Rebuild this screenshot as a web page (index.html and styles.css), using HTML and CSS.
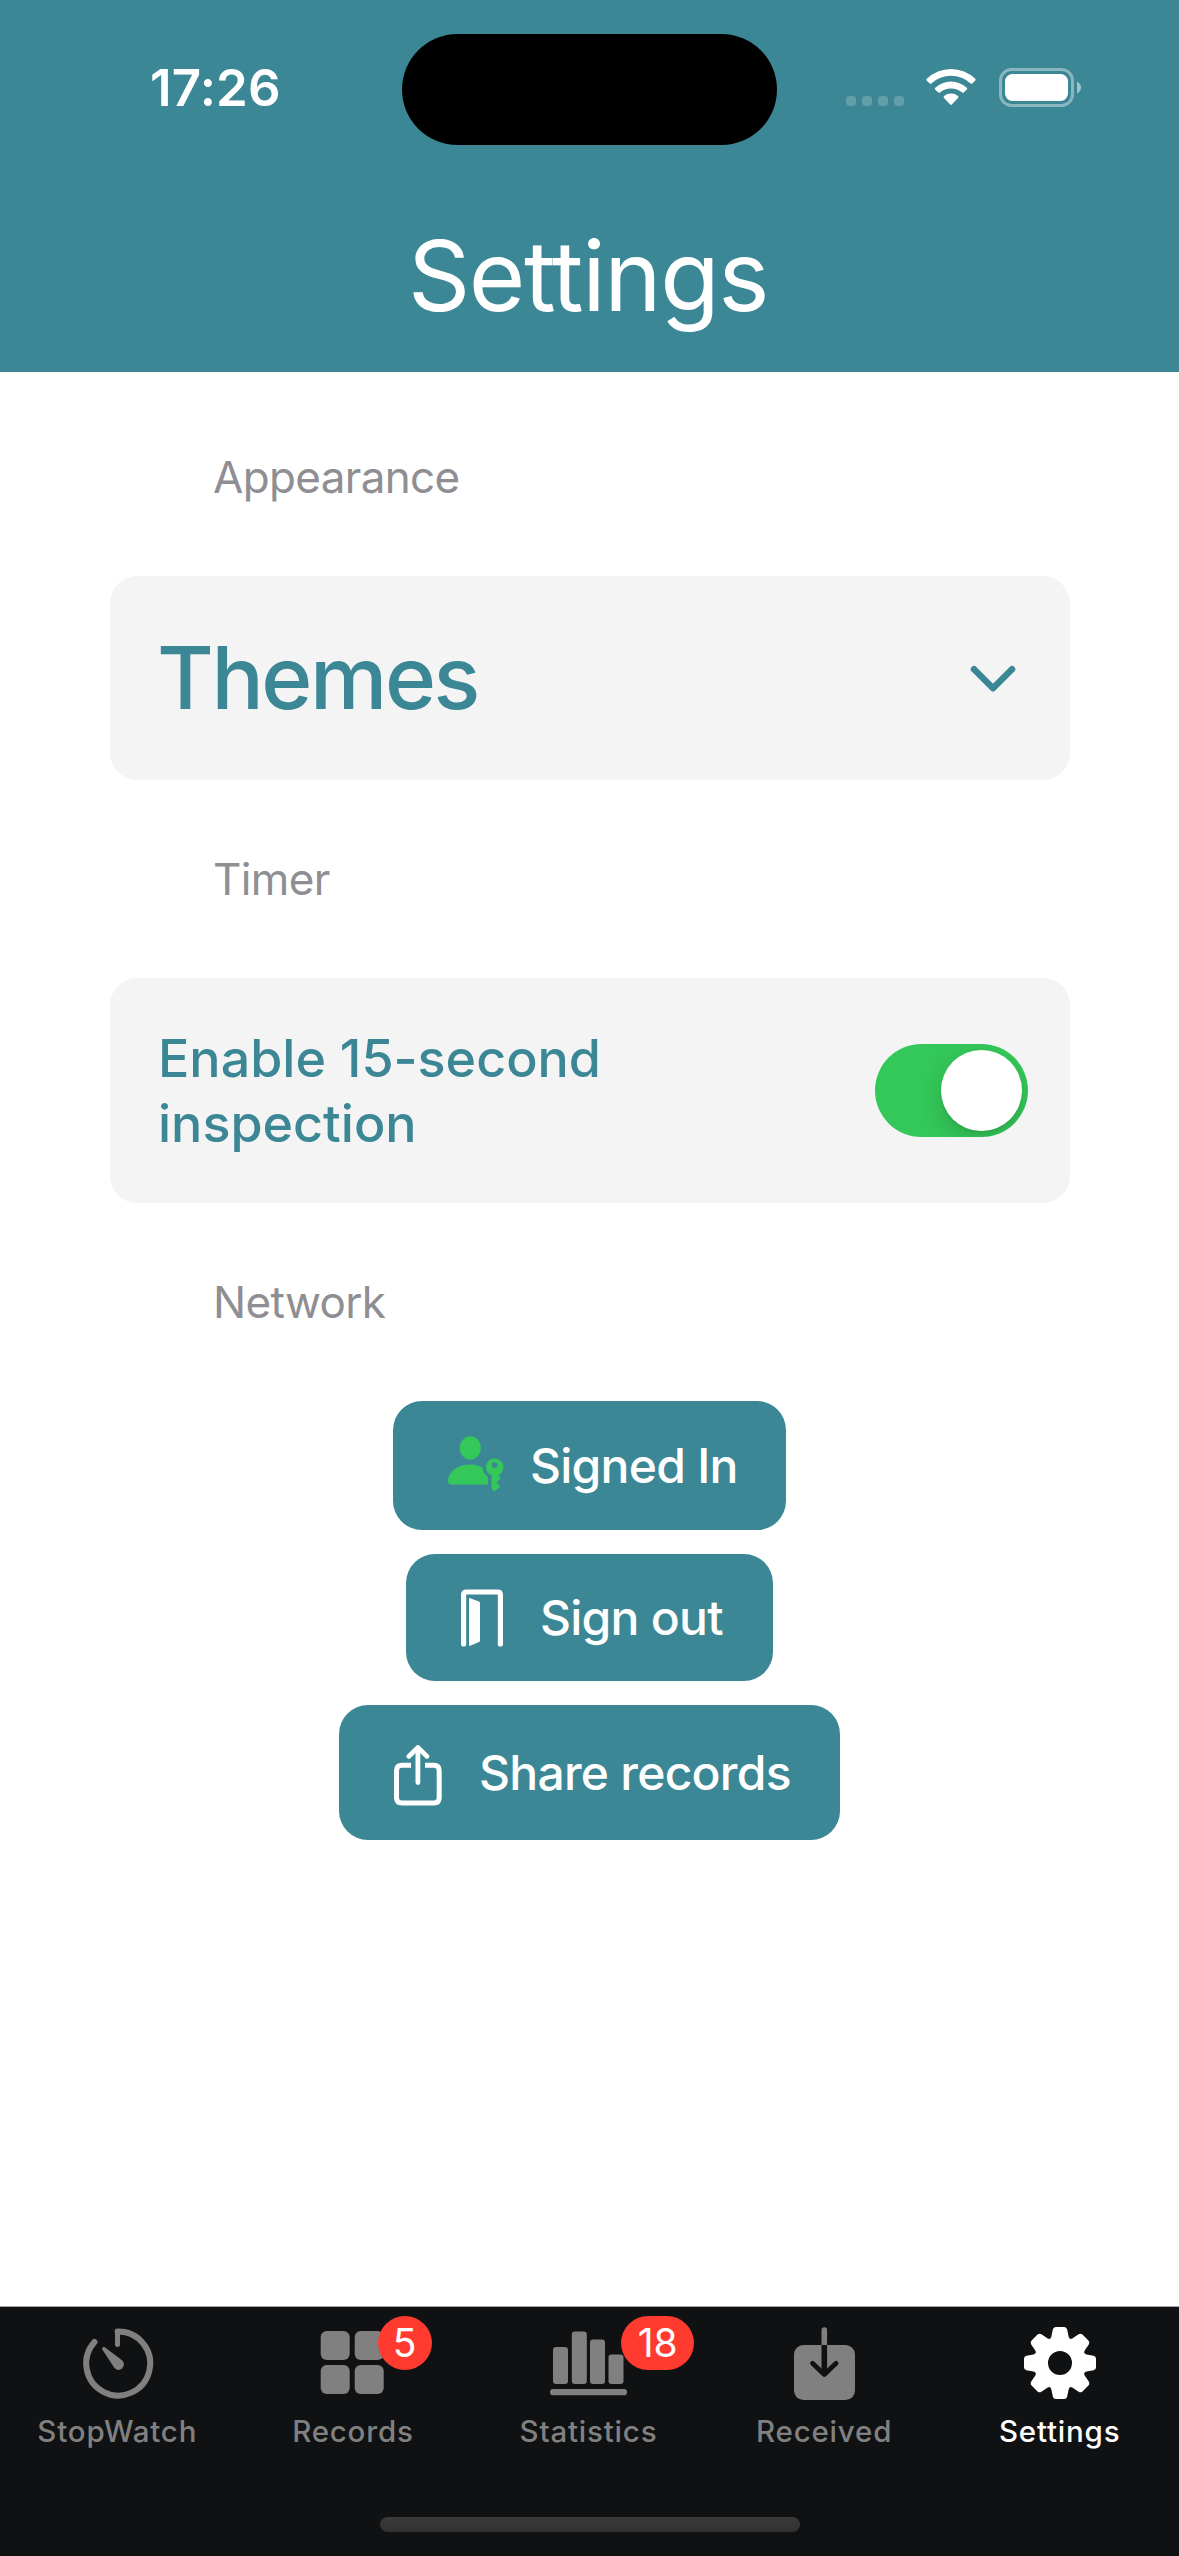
FILE: index.html
```html
<!DOCTYPE html>
<html lang="en">
<head>
<meta charset="utf-8">
<title>Settings</title>
<link rel="stylesheet" href="styles.css">
</head>
<body>
<header class="header">
  <div class="status">
    <div class="time">17:26</div>
    <div class="island"></div>
    <div class="indicators">
      <div class="signal"><i></i><i></i><i></i><i></i></div>
      <svg class="wifi" width="50" height="38" viewBox="0 0 50 38" fill="#fff">
        <path d="M.8 12.8A34.500 34.500 0 0 1 49.200 12.800Q50.200 13.600 49.300 14.500L46.300 17.500Q45.500 18.200 44.700 17.500A29 29 0 0 0 5.300 17.500Q4.500 18.200 3.700 17.500L.7 14.500Q-.2 13.600.8 12.800Z" transform="translate(0 -2)"/>
        <path d="M9.200 19.800A23 23 0 0 1 40.800 19.800Q41.700 20.600 40.900 21.400L37.700 24.600Q36.900 25.300 36.100 24.600A17 17 0 0 0 13.900 24.600Q13.100 25.300 12.300 24.600L9.100 21.400Q8.300 20.600 9.200 19.800Z"/>
        <path d="M18 28A11.500 11.500 0 0 1 32 28Q32.900 29 32 29.900L25.800 36.600Q25 37.400 24.200 36.600L18 29.900Q17.100 29 18 28Z"/>
      </svg>
      <svg class="battery" width="83" height="39" viewBox="0 0 83 39">
        <rect x="1.500" y="1.500" width="72" height="36" rx="11" fill="none" stroke="#fff" stroke-opacity=".4" stroke-width="3"/>
        <rect x="6" y="6" width="63" height="27" rx="7.500" fill="#fff"/>
        <path d="M78 13.500Q82 15.500 82 19.500Q82 23.500 78 25.500Z" fill="#fff" fill-opacity=".5"/>
      </svg>
    </div>
  </div>
  <h1 class="title">Settings</h1>
</header>

<main class="content">
  <h2 class="section">Appearance</h2>
  <div class="card card-themes">
    <span class="themes">Themes</span>
    <svg class="chevron" width="46" height="28" viewBox="0 0 46 28" fill="none" stroke="#3c8795" stroke-width="6.500" stroke-linecap="round" stroke-linejoin="round"><path d="M4 4.200L23 23.200L42 4.200"/></svg>
  </div>
  <h2 class="section">Timer</h2>
  <div class="card card-timer">
    <span class="inspection">Enable 15-second<br>inspection</span>
    <div class="toggle"><div class="thumb"></div></div>
  </div>
  <h2 class="section">Network</h2>
  <div class="buttons">
    <div class="button signed-in">
      <svg width="64" height="64" viewBox="0 0 64 64" fill="#34c759">
        <ellipse cx="29.300" cy="14" rx="10.500" ry="11.700"/>
        <path d="M11 50.500Q7 50.500 7 46.500C7.500 38 16 30.400 29.300 30.400Q36.500 30.400 41.500 33.500Q41.800 39.500 47 43V50.500Z"/>
        <path fill-rule="evenodd" d="M53.600 24.500A8.800 8.800 0 0 1 57.300 41.300L59.600 44.300L56.200 47.700Q55.500 48.500 56.200 49.200L59.200 52.300L54.300 57Q53.600 57.500 53 57L50.600 54.600V41.500A8.800 8.800 0 0 1 53.600 24.500ZM53.600 28.200A2.900 2.900 0 1 0 53.600 34A2.900 2.900 0 1 0 53.600 28.200Z"/>
      </svg>
      <span>Signed In</span>
    </div>
    <div class="button sign-out">
      <svg width="64" height="64" viewBox="0 0 64 64">
        <path d="M10.600 58V8.800Q10.600 6 13.400 6H44.600Q47.400 6 47.400 8.800V58" fill="none" stroke="#fff" stroke-width="5.200" stroke-linecap="round"/>
        <path d="M16 13Q16 11.700 17.200 12.200L26 15.500Q27 16 27 17V54.500Q27 55.500 26 56L17.200 59.800Q16 60.300 16 59Z" fill="#fff"/>
      </svg>
      <span>Sign out</span>
    </div>
    <div class="button share">
      <svg width="64" height="64" viewBox="0 0 64 64" fill="none" stroke="#fff" stroke-width="5">
        <path d="M20 24.200H11Q5.500 24.200 5.500 29.700V56.500Q5.500 62 11 62H42.700Q48.200 62 48.200 56.500V29.700Q48.200 24.200 42.700 24.200H34"/>
        <path d="M26.900 41.500V7" stroke-width="4.800" stroke-linecap="round"/>
        <path d="M17.700 15.500L26.900 6.500L36.100 15.500" stroke-width="4.600" stroke-linecap="round" stroke-linejoin="round"/>
      </svg>
      <span>Share records</span>
    </div>
  </div>
</main>

<nav class="tabbar">
  <div class="tabs">
    <div class="tab">
      <svg class="icon" width="80" height="80" viewBox="0 0 80 80" fill="none" stroke="#808080">
        <path d="M39.600 8.500A32 32 0 1 1 16.500 19" stroke-width="6" stroke-linecap="round"/>
        <path d="M39.500 8.500V21.500" stroke-width="5" stroke-linecap="round"/>
        <path d="M24.500 24.500Q26 23.500 27.500 24.700L43 36.500A5.500 5.500 0 1 1 35.300 43.300L24.300 26.500Q23.700 25.500 24.500 24.500Z" fill="#808080" stroke="none"/>
      </svg>
      <span>StopWatch</span>
    </div>
    <div class="tab">
      <svg class="icon" width="80" height="80" viewBox="0 0 80 80" fill="#808080">
        <rect x="7.700" y="8" width="29" height="29" rx="6"/><rect x="41.700" y="8" width="29" height="29" rx="6"/>
        <rect x="7.700" y="42" width="29" height="29" rx="6"/><rect x="41.700" y="42" width="29" height="29" rx="6"/>
      </svg>
      <b class="badge badge-records">5</b>
      <span>Records</span>
    </div>
    <div class="tab">
      <svg class="icon" width="80" height="80" viewBox="0 0 80 80" fill="#808080">
        <rect x="4" y="24" width="15" height="37" rx="3"/><rect x="22.800" y="8.500" width="15" height="52.500" rx="3"/>
        <rect x="41" y="16.500" width="15" height="44.500" rx="3"/><rect x="59.500" y="31.500" width="15" height="29.500" rx="3"/>
        <rect x="1" y="66" width="77" height="6.300" rx="3.100"/>
      </svg>
      <b class="badge badge-statistics">18</b>
      <span>Statistics</span>
    </div>
    <div class="tab">
      <svg class="icon" width="80" height="80" viewBox="0 0 80 80">
        <rect x="9" y="22" width="61" height="55" rx="9.500" fill="#808080"/>
        <path d="M36.500 22V7Q36.500 4.200 39.300 4.200Q42.100 4.200 42.100 7V22Z" fill="#808080"/>
        <path d="M39.300 22V50" fill="none" stroke="#101113" stroke-width="5.600"/>
        <path d="M27.500 40.300L39.300 51.500L51.100 40.300" fill="none" stroke="#101113" stroke-width="4.800" stroke-linecap="round" stroke-linejoin="round"/>
      </svg>
      <span>Received</span>
    </div>
    <div class="tab active">
      <svg class="icon" width="80" height="80" viewBox="-40 -40 80 80" fill="#fff">
        <defs><path id="tooth" d="M-11 -23.500Q-9 -24.500 -8.600 -26.500L-7.200 -33.500Q-6.600 -36 -4.200 -36H4.200Q6.600 -36 7.200 -33.500L8.600 -26.500Q9 -24.500 11 -23.500Z"/></defs>
        <circle r="18.800" fill="none" stroke="#fff" stroke-width="13.600"/>
        <use href="#tooth"/><use href="#tooth" transform="rotate(45)"/><use href="#tooth" transform="rotate(90)"/><use href="#tooth" transform="rotate(135)"/>
        <use href="#tooth" transform="rotate(180)"/><use href="#tooth" transform="rotate(225)"/><use href="#tooth" transform="rotate(270)"/><use href="#tooth" transform="rotate(315)"/>
      </svg>
      <span>Settings</span>
    </div>
  </div>
  <div class="home"></div>
</nav>
</body>
</html>
```
FILE: styles.css
```css
* { box-sizing: border-box; }

body {
  margin: 0;
  width: 1179px;
  height: 2556px;
  display: flex;
  flex-direction: column;
  background: #fff;
  font-family: Inter, "Liberation Sans", sans-serif;
  overflow: hidden;
}

svg { display: block; flex: none; overflow: visible; }
h1, h2 { margin: 0; font-weight: 400; }

/* Header */
.header {
  height: 372px;
  padding-top: 33px;
  background: #3c8795;
  color: #fff;
}

.status {
  display: grid;
  grid-template-columns: 402px 375px 402px;
  align-items: start;
}

.time {
  padding: 24px 0 0 150px;
  font-size: 51px;
  font-weight: 600;
  line-height: 61px;
  letter-spacing: 0.2px;
}

.island {
  height: 111px;
  margin: 0.5px 0;
  border-radius: 56px;
  background: #000;
}

.indicators {
  display: flex;
  padding: 35px 0 0 69px;
}

.signal {
  display: flex;
  gap: 6px;
  width: 58px;
  margin: 28px 22px 0 0;
}

.signal i {
  width: 10px;
  height: 10px;
  border-radius: 3.500px;
  background: rgba(255, 255, 255, 0.2);
}

.wifi { margin-right: 23px; }

.title {
  margin-top: 71px;
  font-size: 97px;
  line-height: 120px;
  text-align: center;
  letter-spacing: -1.4px;
  text-indent: -3px;
}

/* Content */
.content {
  flex: 1;
  display: flex;
  flex-direction: column;
  gap: 72px;
  padding: 78px 109px 0 110px;
}

.section {
  padding-left: 103px;
  font-size: 44px;
  line-height: 54px;
  letter-spacing: -0.65px;
  color: #8e8e93;
}

.card {
  display: flex;
  align-items: center;
  justify-content: space-between;
  border-radius: 27px;
  background: #f4f4f4;
  color: #3c8795;
  font-weight: 500;
}

.card-themes { height: 204px; padding: 0 54px 0 47px; }
.card-timer { height: 225px; padding: 0 42px 0 48px; }
.themes { font-size: 87px; line-height: 108px; letter-spacing: -2.4px; }
.chevron { margin-top: 2px; }
.inspection { font-size: 52px; line-height: 65px; }

.toggle {
  width: 153px;
  height: 93px;
  padding: 6px;
  display: flex;
  justify-content: flex-end;
  border-radius: 47px;
  background: #34c759;
  overflow: hidden;
}

.thumb {
  width: 81px;
  height: 81px;
  border-radius: 50%;
  background: #fff;
  box-shadow: 0 9px 24px rgba(0, 0, 0, 0.15), 0 3px 3px rgba(0, 0, 0, 0.05);
}

.buttons {
  display: flex;
  flex-direction: column;
  align-items: center;
  gap: 24px;
  margin-right: 1px;
}

.button {
  display: flex;
  align-items: center;
  gap: 24px;
  border-radius: 29px;
  background: #3c8795;
  color: #fff;
  font-size: 48px;
  font-weight: 500;
  line-height: 60px;
  letter-spacing: -0.75px;
  white-space: nowrap;
}

.signed-in { width: 393px; height: 129px; padding-left: 48px; gap: 25px; }
.sign-out { width: 367px; height: 127px; padding-left: 47px; gap: 23px; }
.share { width: 501px; height: 135px; padding-left: 52px; }

/* Tab bar */
.tabbar {
  height: 250px;
  display: flex;
  flex-direction: column;
  align-items: center;
  justify-content: space-between;
  padding-bottom: 24px;
  border-top: 1px solid #a6a6a9;
  background: #101113;
}

.tabs {
  width: 100%;
  padding-right: 1px;
  display: grid;
  grid-template-columns: repeat(5, 1fr);
}

.tab {
  position: relative;
  display: flex;
  flex-direction: column;
  align-items: center;
  padding-top: 16px;
  color: #808080;
  font-size: 29.500px;
  font-weight: 500;
  line-height: 36px;
  letter-spacing: 0.8px;
}

.tab span { margin-right: 1px; }
.tab .icon { margin-bottom: 10px; }
.active { color: #fff; }

.badge {
  position: absolute;
  top: 9px;
  height: 54px;
  border-radius: 27px;
  background: #ff3b30;
  color: #fff;
  font-size: 39px;
  font-weight: 400;
  line-height: 53px;
  letter-spacing: 0;
  text-align: center;
}

.badge-records { left: 142px; width: 54px; }
.badge-statistics { left: 150px; width: 73px; }

.home {
  width: 420px;
  height: 15px;
  border-radius: 8px;
  background: linear-gradient(#3a3a3a, #313131);
}
```
